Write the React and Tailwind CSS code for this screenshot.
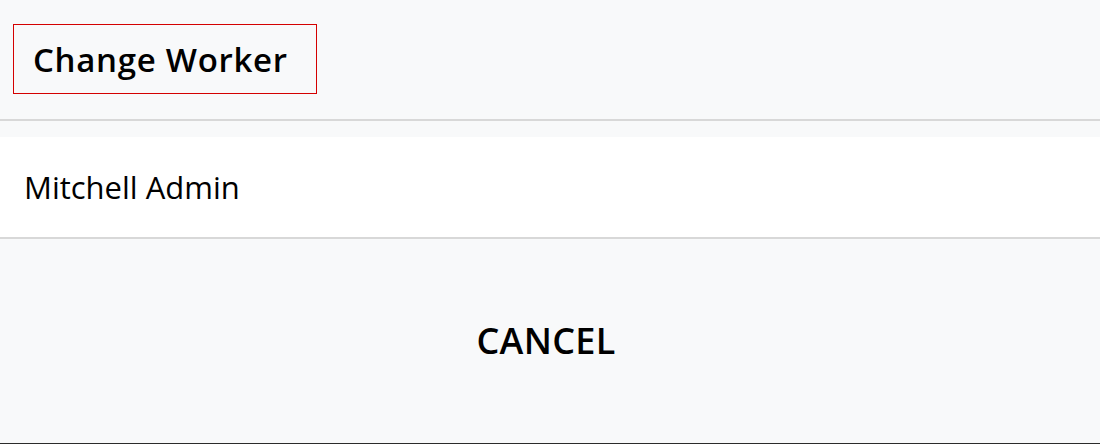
import React from 'react';

const font = { fontFamily: '"Open Sans", "Noto Sans", sans-serif' };

const App = () => {
  return (
    <div className="w-[1100px] h-[444px] bg-[#f8f9fa] flex flex-col overflow-hidden text-black" style={font}>
      {/* Header */}
      <div className="h-[121px] shrink-0 border-b-2 border-[#d8d8d8] pl-[13px] pt-[24px]">
        <div className="w-[304px] h-[70px] border-[1.5px] border-[#d40000] flex items-center pl-[19px]">
          <h1 className="text-[33px] font-semibold leading-none tracking-[0.7px]">Change Worker</h1>
        </div>
      </div>

      {/* Worker list */}
      <div className="mt-[16px] h-[102px] shrink-0 bg-white border-b-2 border-[#d8d8d8] flex items-center pl-[24px]">
        <span className="text-[31px] leading-none">Mitchell Admin</span>
      </div>

      {/* Cancel */}
      <button className="flex-1 flex items-center justify-center pr-[8px] text-[36px] font-semibold tracking-[0.3px] bg-[#f8f9fa] border-b border-[#2b2b2b]">
        CANCEL
      </button>
    </div>
  );
};

export default App;
